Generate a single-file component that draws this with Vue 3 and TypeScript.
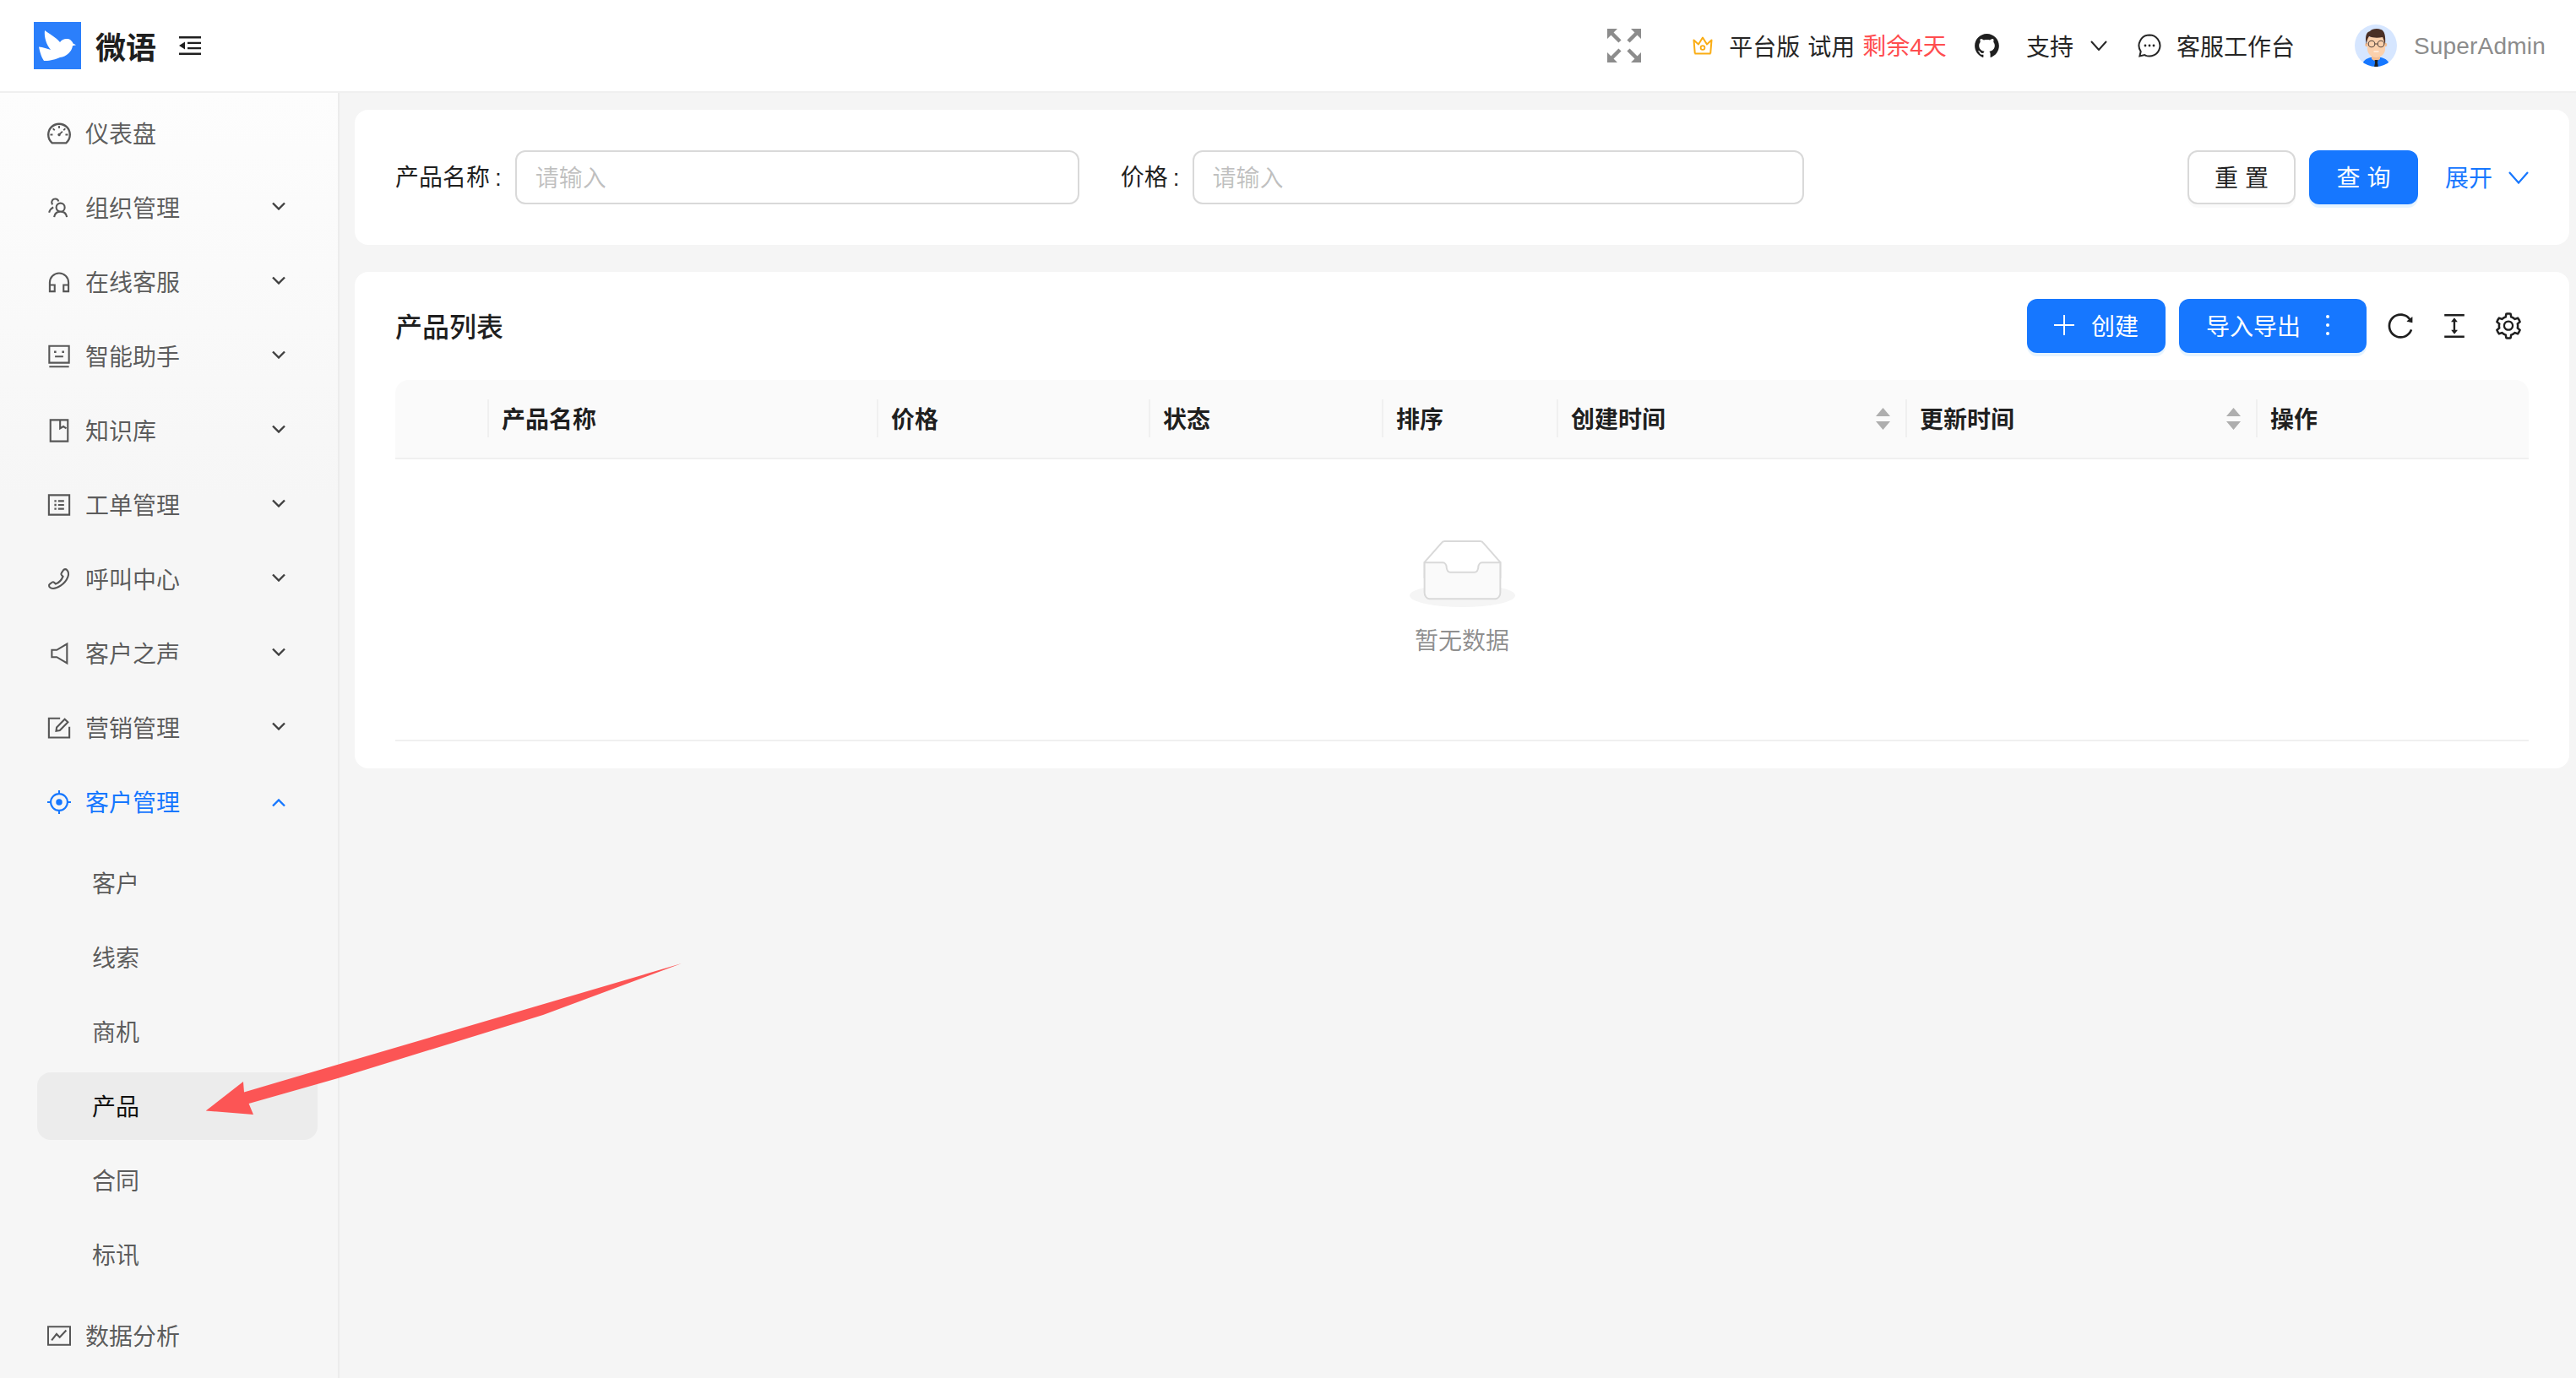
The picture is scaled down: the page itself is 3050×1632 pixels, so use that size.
<script setup lang="ts">
interface MenuIcon {
  line?: string
  solid?: string
  box?: string
}

interface MenuItem {
  label: string
  icon: MenuIcon
  arrow?: boolean
  open?: boolean
}

const dashboardPath = 'M924.8 385.6a446.7 446.7 0 00-96-142.4 446.7 446.7 0 00-142.4-96C631.1 123.8 572.5 112 512 112s-119.1 11.8-174.4 35.2a446.7 446.7 0 00-142.4 96 446.7 446.7 0 00-96 142.4C75.8 440.9 64 499.5 64 560c0 132.7 58.3 257.7 159.9 343.1l1.7 1.4c5.8 4.8 13.1 7.5 20.6 7.5h531.7c7.5 0 14.8-2.7 20.6-7.5l1.7-1.4C901.7 817.7 960 692.7 960 560c0-60.5-11.9-119.1-35.2-174.4zM761.4 836H262.6A371.12 371.12 0 01140 560c0-99.4 38.7-192.8 109-263 70.3-70.3 163.7-109 263-109 99.4 0 192.8 38.7 263 109 70.3 70.3 109 163.7 109 263 0 105.6-44.5 205.5-122.6 276zM623.5 421.5a8.03 8.03 0 00-11.3 0L527.7 506c-18.7-5-39.4-.2-54.1 14.5a55.95 55.95 0 000 79.2 55.95 55.95 0 0079.2 0 55.87 55.87 0 0014.5-54.1l84.5-84.5c3.1-3.1 3.1-8.2 0-11.3l-28.3-28.3zM490 320h44c4.4 0 8-3.6 8-8v-80c0-4.4-3.6-8-8-8h-44c-4.4 0-8 3.6-8 8v80c0 4.4 3.6 8 8 8zm260 218v44c0 4.4 3.6 8 8 8h80c4.4 0 8-3.6 8-8v-44c0-4.4-3.6-8-8-8h-80c-4.4 0-8 3.6-8 8zm12.7-197.2l-31.1-31.1a8.03 8.03 0 00-11.3 0l-56.6 56.6a8.03 8.03 0 000 11.3l31.1 31.1c3.1 3.1 8.2 3.1 11.3 0l56.6-56.6c3.1-3.1 3.1-8.2 0-11.3zm-458.6-31.1a8.03 8.03 0 00-11.3 0l-31.1 31.1a8.03 8.03 0 000 11.3l56.6 56.6c3.1 3.1 8.2 3.1 11.3 0l31.1-31.1c3.1-3.1 3.1-8.2 0-11.3l-56.6-56.6zM262 530h-80c-4.4 0-8 3.6-8 8v44c0 4.4 3.6 8 8 8h80c4.4 0 8-3.6 8-8v-44c0-4.4-3.6-8-8-8z'

const reloadPath = 'M909.1 209.3l-56.4 44.1C775.8 155.1 656.2 92 521.9 92 290 92 102.3 279.5 102 511.5 101.7 743.7 289.8 932 521.9 932c181.3 0 335.8-115 394.6-276.1 1.5-4.2-.7-8.9-4.9-10.3l-56.7-19.5a8 8 0 00-10.1 4.8c-1.8 5-3.8 10-5.9 14.9-17.3 41-42.1 77.8-73.7 109.4A344.77 344.77 0 01655.9 829c-42.3 17.9-87.4 27-133.8 27-46.5 0-91.5-9.1-133.8-27A341.5 341.5 0 01279 755.2a342.16 342.16 0 01-73.7-109.4c-17.9-42.4-27-87.4-27-133.9s9.1-91.5 27-133.9c17.3-41 42.1-77.8 73.7-109.4 31.6-31.6 68.4-56.4 109.3-73.8 42.3-17.9 87.4-27 133.8-27 46.5 0 91.5 9.1 133.8 27a341.5 341.5 0 01109.3 73.8c9.9 9.9 19.2 20.4 27.8 31.4l-60.2 47a8 8 0 003 14.1l175.6 43c5 1.2 9.9-2.6 9.9-7.7l.8-180.9c-.1-6.6-7.8-10.3-13-6.2z'
const heightPath = 'M840 836H184c-4.4 0-8 3.6-8 8v60c0 4.4 3.6 8 8 8h656c4.4 0 8-3.6 8-8v-60c0-4.4-3.6-8-8-8zm0-724H184c-4.4 0-8 3.6-8 8v60c0 4.4 3.6 8 8 8h656c4.4 0 8-3.6 8-8v-60c0-4.4-3.6-8-8-8zM610.8 378c6 0 9.4-7 5.7-11.7L515.7 238.7a7.14 7.14 0 00-11.3 0L403.6 366.3a7.23 7.23 0 005.7 11.7H476v268h-62.8c-6 0-9.4 7-5.7 11.7l100.8 127.5c2.9 3.7 8.5 3.7 11.3 0l100.8-127.5c3.7-4.7.4-11.7-5.7-11.7H544V378h66.8z'
const settingPath = 'M924.8 625.7l-65.5-56c3.1-19 4.7-38.4 4.7-57.8s-1.6-38.8-4.7-57.8l65.5-56a32.03 32.03 0 009.3-35.2l-.9-2.6a443.74 443.74 0 00-79.7-137.9l-1.8-2.1a32.12 32.12 0 00-35.1-9.5l-81.3 28.9c-30-24.6-63.5-44-99.7-57.6l-15.7-85a32.05 32.05 0 00-25.8-25.7l-2.7-.5c-52.1-9.4-106.9-9.4-159 0l-2.7.5a32.05 32.05 0 00-25.8 25.7l-15.8 85.4a351.86 351.86 0 00-99 57.4l-81.9-29.1a32 32 0 00-35.1 9.5l-1.8 2.1a446.02 446.02 0 00-79.7 137.9l-.9 2.6c-4.5 12.5-.8 26.5 9.3 35.2l66.3 56.6c-3.1 18.8-4.6 38-4.6 57.1 0 19.2 1.5 38.4 4.6 57.1L99 625.5a32.03 32.03 0 00-9.3 35.2l.9 2.6c18.1 50.4 44.9 96.9 79.7 137.9l1.8 2.1a32.12 32.12 0 0035.1 9.5l81.9-29.1c29.8 24.5 63.1 43.9 99 57.4l15.8 85.4a32.05 32.05 0 0025.8 25.7l2.7.5a449.4 449.4 0 00159 0l2.7-.5a32.05 32.05 0 0025.8-25.7l15.7-85a350 350 0 0099.7-57.6l81.3 28.9a32 32 0 0035.1-9.5l1.8-2.1c34.8-41.1 61.6-87.5 79.7-137.9l.9-2.6c4.5-12.3.8-26.3-9.3-35zM788.3 465.9c2.5 15.1 3.8 30.6 3.8 46.1s-1.3 31-3.8 46.1l-6.6 40.1 74.7 63.9a370.03 370.03 0 01-42.6 73.6L721 702.8l-31.4 25.8c-23.9 19.6-50.5 35-79.3 45.8l-38.1 14.3-17.9 97a377.5 377.5 0 01-85 0l-17.9-97.2-37.8-14.5c-28.5-10.8-55-26.2-78.7-45.7l-31.4-25.9-93.4 33.2c-17-22.9-31.2-47.6-42.6-73.6l75.5-64.5-6.5-40c-2.4-14.9-3.7-30.3-3.7-45.5 0-15.3 1.2-30.6 3.7-45.5l6.5-40-75.5-64.5c11.3-26.1 25.6-50.7 42.6-73.6l93.4 33.2 31.4-25.9c23.7-19.5 50.2-34.9 78.7-45.7l37.9-14.3 17.9-97.2c28.1-3.2 56.8-3.2 85 0l17.9 97 38.1 14.3c28.7 10.8 55.4 26.2 79.3 45.8l31.4 25.8 92.8-32.9c17 22.9 31.2 47.6 42.6 73.6L781.8 426l6.5 39.9zM512 326c-97.2 0-176 78.8-176 176s78.8 176 176 176 176-78.8 176-176-78.8-176-176-176zm79.2 255.2A111.6 111.6 0 01512 614c-29.9 0-58-11.7-79.2-32.8A111.6 111.6 0 01400 502c0-29.9 11.7-58 32.8-79.2C454 401.6 482.1 390 512 390c29.9 0 58 11.6 79.2 32.8A111.6 111.6 0 01624 502c0 29.9-11.7 58-32.8 79.2z'
const githubPath = 'M511.6 76.3C264.3 76.2 64 276.4 64 523.5 64 718.9 189.3 885 363.8 946c23.5 5.9 19.9-10.8 19.9-22.2v-77.5c-135.7 15.9-141.2-73.9-150.3-88.9C215 726 171.5 718 184.5 703c30.9-15.9 62.4 4 98.9 57.9 26.4 39.1 77.9 32.5 104 26 5.7-23.5 17.9-44.5 34.7-60.8-140.6-25.2-199.2-111-199.2-213 0-49.5 16.3-95 48.3-131.7-20.4-60.5 1.9-112.3 4.9-120 58.1-5.2 118.5 41.6 123.2 45.3 33-8.9 70.7-13.6 112.9-13.6 42.4 0 80.2 4.9 113.5 13.9 11.3-8.6 67.3-48.8 121.3-43.9 2.9 7.7 24.7 58.3 5.5 118 32.4 36.8 48.9 82.7 48.9 132.3 0 102.2-59 188.1-200 212.9a127.5 127.5 0 0138.1 91v112.5c.8 9 0 17.9 15 17.9 177.1-59.7 304.6-227 304.6-424.1 0-247.2-200.4-447.3-447.5-447.3z'

const topMenu: MenuItem[] = [
  { label: '仪表盘', icon: { solid: dashboardPath, box: '64 64 896 896' } },
  {
    label: '组织管理',
    arrow: true,
    icon: { line: 'M13.4 7.4a4.3 4.3 0 1 0 0 8.6 4.3 4.3 0 1 0 0-8.6zM7 21.6c.5-3.4 3-5.6 6.4-5.6s5.9 2.2 6.4 5.6M5.4 8.8a3.5 3.5 0 1 1 6-3.2M1.8 17c.7-2.7 2.2-4.4 4.4-5.4' },
  },
  {
    label: '在线客服',
    arrow: true,
    icon: { line: 'M2.5 21.5V12.5a9.5 9.5 0 0 1 19 0v9M2.5 15h5v6.5h-5zM16.5 15h5v6.5h-5z' },
  },
  {
    label: '智能助手',
    arrow: true,
    icon: {
      line: 'M2 1.5h20v17H2zM7.8 12.2h8.4M2 22.5h20',
      solid: 'M6.9 6.4h2.2v2.2H6.9zM14.9 6.4h2.2v2.2h-2.2z',
    },
  },
  {
    label: '知识库',
    arrow: true,
    icon: { line: 'M3.2 1.2h17.6v21.6H3.2zM13 1.2v8.6l3.3-2 3 2' },
  },
  {
    label: '工单管理',
    arrow: true,
    icon: {
      line: 'M1.6 2h20.8v20H1.6zM11 8h6M11 12h6M11 16h6',
      solid: 'M7.2 7h2v2h-2zM7.2 11h2v2h-2zM7.2 15h2v2h-2z',
    },
  },
  {
    label: '呼叫中心',
    arrow: true,
    icon: { line: 'M16.5 2.6c1-1 2.5-1 3.4 0 1.7 1.8 2 4.3 1 7-1.2 3.3-3.8 6.6-7.4 9-3 2-6.7 3.4-9.7 2.5-1-.3-1.8-1.2-2-2.2-.2-.8.1-1.6.8-2.1l2.2-1.6c.7-.5 1.7-.4 2.3.2l1.4 1.4c2.8-1 6-4.2 7.4-7.6l-1.3-1.2c-.6-.6-.7-1.6-.2-2.3z' },
  },
  {
    label: '客户之声',
    arrow: true,
    icon: { line: 'M20 2.2v19.6L9.6 15.6H4.6V8.4h5z' },
  },
  {
    label: '营销管理',
    arrow: true,
    icon: { line: 'M13 2.4H1.6v19.4h20.8V11M9 15.2l.5-3.6 8.2-8.4 3.2 3-8.2 8.4z' },
  },
]

const customerIcon: MenuIcon = {
  line: 'M12 3.5a8.5 8.5 0 1 0 0 17 8.5 8.5 0 1 0 0-17zM12 0v4M12 20v4M0 12h4M20 12h4',
  solid: 'M12 8.8a3.2 3.2 0 1 0 0 6.4 3.2 3.2 0 1 0 0-6.4z',
}

const subMenu = [
  { label: '客户' },
  { label: '线索' },
  { label: '商机' },
  { label: '产品', active: true },
  { label: '合同' },
  { label: '标讯' },
]

const analysisIcon: MenuIcon = {
  line: 'M.8 2.8h22.4v18.4H.8zM4.4 16.6l5-6.4 3.2 3.2 6.6-7',
}

const columns = [
  { title: '', width: 111 },
  { title: '产品名称', width: 461 },
  { title: '价格', width: 322 },
  { title: '状态', width: 276 },
  { title: '排序', width: 207 },
  { title: '创建时间', width: 413, sortable: true },
  { title: '更新时间', width: 415, sortable: true },
  { title: '操作', width: 321 },
]

const gridColumns = columns.map((c) => `${c.width}px`).join(' ')
</script>

<template>
  <div class="app">
    <header class="header">
      <svg class="logo" viewBox="0 0 56 56">
        <rect width="56" height="56" fill="#2b7ffb" />
        <path
          fill="#fff"
          d="M13 10C18 14 26 18 31 24C33 20.500 37 19.500 40 20C44 20.500 46 24 46.500 25.500L50 27.300L46 28.200C45 35 39 41 31 42C26 44.300 18 46.500 12 46C9 42 7 35 6 29.500C11 30 16 31.500 20 33C15 27 12 18 13 10Z"
        />
      </svg>
      <span class="brand">微语</span>
      <svg class="fold" viewBox="0 0 26 22">
        <path d="M0 0h26v2.600H0zM0 19.400h26v2.600H0zM10 6.700h16v2.400H10zM10 12.900h16v2.400H10z" fill="#1f1f1f" />
        <path d="M0 11l7-4.600v9.200z" fill="#1f1f1f" />
      </svg>

      <div class="header__right">
        <svg class="expand" viewBox="0 0 40 40">
          <g fill="#8c8c8c">
            <path d="M0 0h12L0 12zM40 0H28l12 12zM0 40h12L0 28zM40 40H28l12-12z" />
          </g>
          <g stroke="#8c8c8c" stroke-width="4.500" fill="none">
            <path d="M5 5l10 10M35 5L25 15M5 35l10-10M35 35L25 25" />
          </g>
        </svg>
        <svg class="crown" viewBox="0 0 24 22">
          <path d="M2.500 20.500h19M2.800 20.500L1.500 4.500l5.500 5L12 1.500l5 8 5.500-5-1.300 16" fill="none" stroke="#faad14" stroke-width="2" stroke-linejoin="round" />
          <circle cx="12" cy="13.500" r="2.400" fill="none" stroke="#faad14" stroke-width="1.800" />
        </svg>
        <span class="plan">平台版</span>
        <span class="plan plan--gap">试用</span>
        <span class="plan plan--gap plan--red">剩余<i class="latin">4</i>天</span>
        <svg class="github" viewBox="64 76 896 872">
          <path :d="githubPath" fill="#1f1f1f" />
        </svg>
        <span class="support">支持</span>
        <svg class="support__arrow" viewBox="0 0 20 12">
          <path d="M1 1l9 10 9-10" fill="none" stroke="#262626" stroke-width="2" />
        </svg>
        <svg class="chat" viewBox="0 0 28 28">
          <path d="M14 1.500a12.500 12.500 0 1 1-5.800 23.600L2.400 26.400l1.300-5.400A12.500 12.500 0 0 1 14 1.500z" fill="none" stroke="#262626" stroke-width="2" />
          <circle cx="9" cy="14" r="1.400" fill="#262626" />
          <circle cx="14" cy="14" r="1.400" fill="#262626" />
          <circle cx="19" cy="14" r="1.400" fill="#262626" />
        </svg>
        <span class="workspace">客服工作台</span>
        <svg class="avatar" viewBox="0 0 50 50">
          <clipPath id="avatar-clip"><circle cx="25" cy="25" r="25" /></clipPath>
          <g clip-path="url(#avatar-clip)">
            <rect width="50" height="50" fill="#d6e6ff" />
            <path d="M8 50c1-7 6-10 11-11h12c5 1 10 4 11 11z" fill="#1677ff" />
            <path d="M20 33h10v8l-5 3-5-3z" fill="#f3bd93" />
            <circle cx="14.500" cy="24" r="2.300" fill="#f3bd93" />
            <circle cx="36" cy="24" r="2.300" fill="#f3bd93" />
            <path d="M15 15h21v14c0 6-5 10-10.500 10S15 35 15 29z" fill="#fbd0ac" />
            <path d="M14 24c-2-8-1-15 4-16 2-3 9-4 13-2 4 1 6 7 5 18-1-4-2-7-3-9-5 1-12 1-16-1-2 3-3 6-3 10z" fill="#4a2f25" />
            <circle cx="20" cy="23" r="3.800" fill="none" stroke="#5a4a42" stroke-width="1.100" />
            <circle cx="31" cy="23" r="3.800" fill="none" stroke="#5a4a42" stroke-width="1.100" />
            <path d="M23.800 23h3.400" stroke="#5a4a42" stroke-width="1.100" />
            <path d="M22.500 32h6" stroke="#fff" stroke-width="1.200" />
            <path d="M23.500 42h4l-.6 3 1 5h-4.800l1-5z" fill="#1f1f1f" />
          </g>
        </svg>
        <span class="username">SuperAdmin</span>
      </div>
    </header>

    <div class="body">
      <aside class="sidebar">
        <nav class="menu">
          <div v-for="item in topMenu" :key="item.label" class="menu__item">
            <svg class="menu__icon" :viewBox="item.icon.box ?? '0 0 24 24'">
              <path v-if="item.icon.line" :d="item.icon.line" fill="none" stroke="currentColor" stroke-width="1.800" />
              <path v-if="item.icon.solid" :d="item.icon.solid" fill="currentColor" />
            </svg>
            <span class="menu__label">{{ item.label }}</span>
            <svg v-if="item.arrow" class="menu__arrow" viewBox="0 0 16 10">
              <path d="M1 1.500l7 7 7-7" fill="none" stroke="#404040" stroke-width="2.400" />
            </svg>
          </div>

          <div class="menu__item menu__item--open">
            <svg class="menu__icon" viewBox="0 0 24 24">
              <path :d="customerIcon.line" fill="none" stroke="currentColor" stroke-width="1.800" />
              <path :d="customerIcon.solid" fill="currentColor" />
            </svg>
            <span class="menu__label">客户管理</span>
            <svg class="menu__arrow menu__arrow--up" viewBox="0 0 16 10">
              <path d="M1 8.500l7-7 7 7" fill="none" stroke="currentColor" stroke-width="2.400" />
            </svg>
          </div>
          <div class="submenu">
            <div
              v-for="sub in subMenu"
              :key="sub.label"
              class="submenu__item"
              :class="{ 'submenu__item--active': sub.active }"
            >
              {{ sub.label }}
            </div>
          </div>

          <div class="menu__item">
            <svg class="menu__icon" viewBox="0 0 24 24">
              <path :d="analysisIcon.line" fill="none" stroke="currentColor" stroke-width="1.800" />
            </svg>
            <span class="menu__label">数据分析</span>
          </div>
        </nav>
      </aside>

      <main class="main">
        <section class="card filter">
          <label class="filter__label">产品名称<i class="filter__colon">:</i></label>
          <input class="filter__input filter__input--name" placeholder="请输入">
          <label class="filter__label filter__label--second">价格<i class="filter__colon">:</i></label>
          <input class="filter__input filter__input--price" placeholder="请输入">
          <button class="btn btn--default filter__reset"><span class="btn__spaced">重置</span></button>
          <button class="btn btn--primary filter__search"><span class="btn__spaced">查询</span></button>
          <span class="filter__more">展开</span>
          <svg class="filter__arrow" viewBox="0 0 24 15">
            <path d="M1 1l11 12.500L23 1" fill="none" stroke="#1677ff" stroke-width="2.200" />
          </svg>
        </section>

        <section class="card list">
          <div class="list__head">
            <h2 class="list__title">产品列表</h2>
            <button class="btn btn--primary list__create">
              <svg class="btn__plus" viewBox="0 0 24 24"><path d="M0 11h24v2H0zM11 0h2v24h-2z" fill="#fff" /></svg>
              创建
            </button>
            <button class="btn btn--primary list__import">
              导入导出
              <svg class="btn__more" viewBox="0 0 28 28">
                <circle cx="14" cy="4" r="2" fill="#fff" />
                <circle cx="14" cy="14" r="2" fill="#fff" />
                <circle cx="14" cy="24" r="2" fill="#fff" />
              </svg>
            </button>
            <svg class="tool tool--reload" viewBox="0 0 1024 1024"><path :d="reloadPath" /></svg>
            <svg class="tool" viewBox="0 0 1024 1024"><path :d="heightPath" /></svg>
            <svg class="tool tool--last" viewBox="0 0 1024 1024"><path :d="settingPath" /></svg>
          </div>

          <div class="table">
            <div class="table__head" :style="{ gridTemplateColumns: gridColumns }">
              <div
                v-for="(col, i) in columns"
                :key="i"
                class="table__th"
                :class="{ 'table__th--sep': i < columns.length - 1 }"
              >
                <span>{{ col.title }}</span>
                <svg v-if="col.sortable" class="table__sort" viewBox="0 0 17 26">
                  <path d="M8.500 0L17 10H0zM0 16h17L8.500 26z" fill="#aeaeae" />
                </svg>
              </div>
            </div>
            <div class="table__empty">
              <svg class="empty__img" viewBox="0 0 64 41">
                <g transform="translate(0 1)" fill="none" fill-rule="evenodd">
                  <ellipse fill="#f5f5f5" cx="32" cy="33" rx="32" ry="7" />
                  <g fill-rule="nonzero" stroke="#d9d9d9">
                    <path d="M55 12.760L44.854 1.258C44.367.474 43.656 0 42.907 0H21.093c-.749 0-1.460.474-1.947 1.257L9 12.761V22h46v-9.240z" />
                    <path d="M41.613 15.931c0-1.605.994-2.930 2.227-2.931H55v18.137C55 33.260 53.680 35 52.050 35h-40.100C10.320 35 9 33.259 9 31.137V13h11.160c1.233 0 2.227 1.323 2.227 2.928v.022c0 1.605 1.005 2.901 2.237 2.901h14.752c1.232 0 2.237-1.308 2.237-2.913v-.007z" fill="#fafafa" />
                  </g>
                </g>
              </svg>
              <p class="empty__text">暂无数据</p>
            </div>
          </div>
        </section>
      </main>
    </div>

    <!-- annotation drawn over the screenshot -->
    <svg class="pointer" viewBox="0 0 3050 1632">
      <path d="M807 1141L289 1293.400L288 1281L243.700 1315.500L300 1320L294.600 1307L400 1277L643 1202Z" fill="#fc5555" />
    </svg>
  </div>
</template>

<style scoped>
.app {
  position: relative;
  display: flex;
  flex-direction: column;
  width: 3050px;
  height: 1632px;
  overflow: hidden;
  background: #f5f5f5;
  font-family: "Noto Sans CJK SC", "Liberation Sans", sans-serif;
  font-size: 28px;
  line-height: 42px;
  color: rgba(0, 0, 0, 0.88);
}

.latin {
  font-family: "Liberation Sans", sans-serif;
  font-style: normal;
}

.header {
  display: flex;
  align-items: center;
  flex: none;
  height: 108px;
  padding: 0 36px 0 40px;
  background: #fff;
  border-bottom: 2px solid #f0f0f0;
  box-sizing: content-box;
}

.logo {
  width: 56px;
  height: 56px;
}

.brand {
  margin-left: 17px;
  font-size: 36px;
  font-weight: 700;
  color: #1f1f1f;
}

.fold {
  width: 26px;
  height: 22px;
  margin-left: 27px;
}

.header__right {
  display: flex;
  align-items: center;
  margin-left: auto;
  color: #262626;
}

.expand {
  width: 40px;
  height: 40px;
}

.crown {
  width: 24px;
  height: 22px;
  margin-left: 61px;
}

.plan {
  margin-left: 19px;
  white-space: nowrap;
}

.plan--gap {
  margin-left: 9px;
}

.plan--red {
  color: #ff4d4f;
}

.github {
  width: 29px;
  height: 28px;
  margin-left: 33px;
}

.support {
  margin-left: 32px;
}

.support__arrow {
  width: 20px;
  height: 12px;
  margin-left: 20px;
}

.chat {
  width: 28px;
  height: 28px;
  margin-left: 36px;
}

.workspace {
  margin-left: 18px;
}

.avatar {
  width: 50px;
  height: 50px;
  margin-left: 71px;
}

.username {
  margin-top: 2px;
  margin-left: 20px;
  font-family: "Liberation Sans", sans-serif;
  letter-spacing: 0.2px;
  color: #8c8c8c;
}

.body {
  display: flex;
  flex: 1;
  min-height: 0;
}

.sidebar {
  flex: none;
  width: 400px;
  background: linear-gradient(#fdfdfd, #f6f6f6 480px);
  border-right: 2px solid #ececec;
}

.menu {
  display: flex;
  flex-direction: column;
  gap: 8px;
  width: 332px;
  margin: 8px 0 0 44px;
}

.menu__item {
  display: flex;
  align-items: center;
  flex: none;
  height: 80px;
  padding: 0 38px 0 12px;
  color: rgba(0, 0, 0, 0.65);
}

.menu__item--open {
  color: #1677ff;
}

.menu__icon {
  flex: none;
  width: 28px;
  height: 28px;
}

.menu__label {
  margin-left: 17px;
  margin-bottom: 2px;
}

.menu__arrow {
  width: 16px;
  height: 10px;
  margin: 0 0 4px auto;
}

.menu__arrow--up {
  margin-bottom: 0;
  margin-top: 2px;
}

.submenu {
  display: flex;
  flex-direction: column;
  gap: 8px;
  margin: 8px 0;
}

.submenu__item {
  height: 80px;
  padding-left: 65px;
  line-height: 78px;
  border-radius: 16px;
  color: rgba(0, 0, 0, 0.65);
}

.submenu__item--active {
  background: #ececec;
  color: #111;
}

.main {
  display: flex;
  flex-direction: column;
  flex: 1;
  gap: 32px;
  min-width: 0;
  padding: 20px 8px 0 18px;
}

.card {
  background: #fff;
  border-radius: 16px;
}

.filter {
  display: flex;
  align-items: center;
  padding: 48px;
}

.filter__label {
  margin-bottom: 2px;
  white-space: nowrap;
}

.filter__label--second {
  margin-left: 49px;
}

.filter__colon {
  margin: 0 16px 0 6px;
  font-family: "Liberation Sans", sans-serif;
  font-style: normal;
}

.filter__label--second .filter__colon {
  margin-right: 15px;
}

.filter__input {
  flex: none;
  height: 64px;
  padding: 0 22px 2px;
  box-sizing: border-box;
  background: #fff;
  border: 2px solid #d9d9d9;
  border-radius: 12px;
  font: inherit;
  outline: none;
}

.filter__input::placeholder {
  color: rgba(0, 0, 0, 0.25);
}

.filter__input--name {
  width: 668px;
}

.filter__input--price {
  width: 724px;
}

.btn {
  display: flex;
  align-items: center;
  justify-content: center;
  flex: none;
  height: 64px;
  padding: 0 0 2px;
  box-sizing: border-box;
  border: 0;
  border-radius: 12px;
  font: inherit;
  white-space: nowrap;
}

.btn--primary {
  background: #1677ff;
  color: #fff;
  box-shadow: 0 4px 0 rgba(5, 145, 255, 0.1);
}

.btn--default {
  background: #fff;
  border: 2px solid #d9d9d9;
  color: rgba(0, 0, 0, 0.88);
  box-shadow: 0 4px 0 rgba(0, 0, 0, 0.02);
}

.btn__spaced {
  letter-spacing: 8px;
  margin-right: -8px;
}

.filter__reset {
  width: 128px;
  margin-left: auto;
}

.filter__search {
  width: 129px;
  margin-left: 16px;
}

.filter__more {
  margin-left: 32px;
  margin-bottom: 2px;
  color: #1677ff;
}

.filter__arrow {
  width: 24px;
  height: 15px;
  margin-left: 19px;
}

.list {
  padding: 32px 48px;
}

.list__head {
  display: flex;
  align-items: center;
  height: 64px;
}

.list__title {
  margin: 0 auto 2px 0;
  font-size: 32px;
  font-weight: 500;
  color: rgba(0, 0, 0, 0.88);
}

.list__create {
  width: 164px;
}

.btn__plus {
  width: 24px;
  height: 24px;
  margin-right: 20px;
}

.list__import {
  width: 222px;
  margin-left: 16px;
}

.btn__more {
  width: 28px;
  height: 28px;
  margin-left: 18px;
}

.tool {
  flex: none;
  width: 36px;
  height: 36px;
  margin-left: 28px;
  fill: #1f1f1f;
}

.tool--reload {
  margin-left: 22px;
}

.tool--last {
  margin-right: 6px;
}

.table {
  margin-top: 32px;
}

.table__head {
  display: grid;
  height: 94px;
  box-sizing: border-box;
  background: #fafafa;
  border-bottom: 2px solid #f0f0f0;
  border-radius: 16px 16px 0 0;
}

.table__th {
  position: relative;
  display: flex;
  align-items: center;
  justify-content: space-between;
  padding: 0 20px 2px 15px;
  font-weight: 600;
}

/* column divider */
.table__th--sep::after {
  content: "";
  position: absolute;
  top: 23px;
  right: 0;
  width: 2px;
  height: 45px;
  background: #f0f0f0;
}

.table__sort {
  width: 17px;
  height: 26px;
  margin-top: 2px;
}

.table__empty {
  display: flex;
  flex-direction: column;
  align-items: center;
  height: 334px;
  padding-top: 95px;
  box-sizing: border-box;
  border-bottom: 2px solid #f0f0f0;
}

.empty__img {
  width: 125px;
  height: 80px;
}

.empty__text {
  margin: 17px 0 0;
  color: rgba(0, 0, 0, 0.45);
}

.pointer {
  position: absolute;
  top: 0;
  left: 0;
  width: 3050px;
  height: 1632px;
  pointer-events: none;
}
</style>

<style>
html,
body {
  margin: 0;
  background: #f5f5f5;
}
</style>
